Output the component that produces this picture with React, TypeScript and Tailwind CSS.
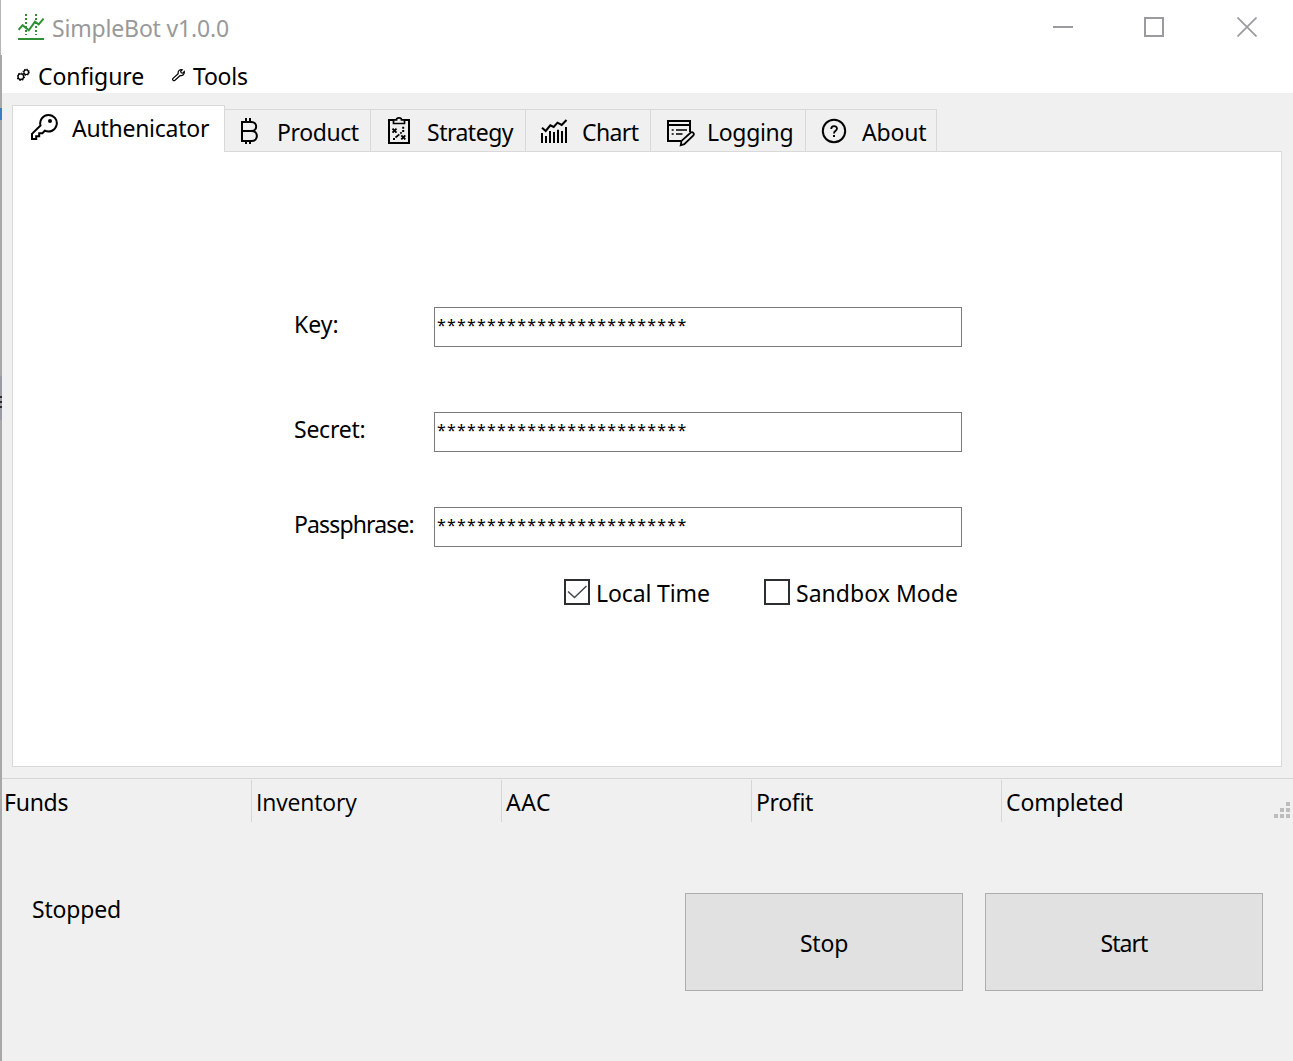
import React from "react";

function Icon({ box, className = "", children }: { box: string; className?: string; children: React.ReactNode }) {
  const [, , w, h] = box.split(" ");
  return (
    <svg viewBox={box} width={w} height={h} fill="none" stroke="currentColor" strokeWidth="2" className={`shrink-0 ${className}`}>
      {children}
    </svg>
  );
}

const LogoIcon = () => (
  <Icon box="18 13 28 28" className="text-[#2f8f35]">
    <path d="M26 14v21M36 14v21" strokeDasharray="2 2" strokeWidth="2" />
    <path d="M18.600 29.800L22.600 25.200L28.800 30.300L35 21.700L38.700 24.300L43.600 18.700" strokeWidth="2" />
    <path d="M18 39h26" />
  </Icon>
);

const GearsIcon = () => (
  <Icon box="17 68 14 14">
    <circle cx="20.8" cy="76.7" r="2.8" strokeWidth="1.3" />
    <circle cx="20.8" cy="76.7" r="3.7" strokeWidth="1.1" strokeDasharray="1.3 1.6" />
    <circle cx="26.2" cy="72.2" r="2.3" strokeWidth="1.2" />
    <circle cx="26.2" cy="72.2" r="3.1" strokeWidth="1.1" strokeDasharray="1.1 1.35" />
  </Icon>
);

const WrenchIcon = () => (
  <Icon box="172 68 14 14">
    <path d="M178.2 73.7C177.6 71 180 69 182.3 69.7L180.7 71.4l.5 1.4 1.5.4 1.6-1.7C184.7 74 182.5 76.3 180.2 75.5L175 80.2C173.6 81.3 171.9 79.7 173 78.4Z" strokeWidth="1.2" />
  </Icon>
);

const KeyIcon = () => (
  <Icon box="30 113 28 28">
    <path d="M40.500 125.500L32 133.900V139H36.200V136.200H39.200V133.200H42.400L44.800 130.700A8.300 8.300 0 1 0 40.500 125.500Z" />
    <circle cx="50" cy="121" r="2" fill="currentColor" stroke="none" />
  </Icon>
);

const BitcoinIcon = () => (
  <Icon box="239 117 28 28">
    <path d="M242 122H251.500C257.700 122 257.700 131 251.500 131H242M251.500 131C258.700 131 258.700 141 251.500 141H242V121" />
    <path d="M246 118v4M250 118v4M246 141v3M250 141v3" strokeWidth="2" />
  </Icon>
);

const StrategyIcon = () => (
  <Icon box="385 117 28 28">
    <path d="M393 120H389V143H409V120H405" />
    <path d="M393.500 123.500V119.800H396.500C396.500 117.200 401.500 117.200 401.500 119.800H404.500V123.500Z" strokeWidth="1.700" />
    <path d="M392.500 128.700l4 4M396.500 128.700l-4 4M401.300 135.300l4 4M405.300 135.300l-4 4" strokeWidth="1.900" />
    <path d="M395.500 137.500L401.700 132.300" strokeWidth="1.700" strokeDasharray="5 1.200" />
    <path d="M402.200 127.700h2M402.200 131h2M393 139h2" strokeWidth="2" />
  </Icon>
);

const ChartIcon = () => (
  <Icon box="540 117 28 28">
    <path d="M542 133v10M546 136v7M550 131v12M554 132v11M558 129.700v13.300M562 131v12M566 127v16" strokeWidth="2" />
    <path d="M542 127.700l3.700 3.300 4.600-5.700 3.400 1.700 3.800-4.300 4.200 2.300 4.800-5" strokeWidth="2" />
  </Icon>
);

const LoggingIcon = () => (
  <Icon box="665 118 30 30">
    <path d="M690 132V121H668V141H681.500M668 125h22" />
    <path d="M671.700 130h2M671.700 134h2M676 130h11M676 134h6.500" strokeWidth="1.700" />
    <path d="M680.700 145.300L681.500 140.900L690.800 132.500C692.600 131.500 694.800 133.300 693.400 135.300L684.300 144.200Z" strokeWidth="1.800" />
  </Icon>
);

const AboutIcon = () => (
  <Icon box="820 117 28 28">
    <circle cx="834" cy="131" r="11.200" />
    <path d="M831.200 129C831.200 125.200 837 125.200 837 128.600C837 131 834 130.700 834 133.500" strokeWidth="1.800" />
    <path d="M833 136h2" strokeWidth="2" />
  </Icon>
);

const tabs = [
  { name: "Product", icon: <BitcoinIcon />, box: "w-[146px]", text: "ml-[10px] tracking-[-0.4px]" },
  { name: "Strategy", icon: <StrategyIcon />, box: "w-[155px]", text: "ml-[14px] tracking-[-0.5px]" },
  { name: "Chart", icon: <ChartIcon />, box: "w-[125px]", text: "ml-[14px] tracking-[-0.6px]" },
  { name: "Logging", icon: <LoggingIcon />, box: "w-[155px]", text: "ml-[12px] tracking-[-0.32px]" },
  { name: "About", icon: <AboutIcon />, box: "w-[131px]", text: "ml-[14px] tracking-[-0.2px]" },
];

const fields = [
  { name: "Key:", row: "mb-[65px]", text: "tracking-[0px]" },
  { name: "Secret:", row: "mb-[55px]", text: "tracking-[-0.25px]" },
  { name: "Passphrase:", row: "", text: "tracking-[-0.86px]" },
];

const statuses = [
  { name: "Funds", text: "pl-[2px] tracking-[-0.25px]" },
  { name: "Inventory", text: "pl-1 font-['Open_Sans'] tracking-[-0.15px]" },
  { name: "AAC", text: "pl-1 tracking-[0.53px]" },
  { name: "Profit", text: "pl-1 tracking-[-0.35px]" },
  { name: "Completed", text: "pl-1 tracking-[-0.1px]" },
];

function Grip() {
  return (
    <div className="mt-[23px] mr-[3px] ml-auto grid h-4 w-4 grid-cols-3 gap-[2px]">
      {[0, 0, 1, 0, 1, 1, 1, 1, 1].map((on, i) => (
        <span key={i} className={on ? "size-1 bg-[#bdbdbd]" : "size-1"} />
      ))}
    </div>
  );
}

export default function App() {
  return (
    <div className="flex h-[1061px] w-[1293px] overflow-hidden bg-[#f0f0f0] font-['Noto_Sans',sans-serif] text-[23px] leading-8 whitespace-nowrap text-black">
      <div className="flex w-[2px] shrink-0 flex-col bg-[#a8a8a8]">
        <div className="h-[55px] border-l border-[#b5b5b5] bg-white" />
        <div className="mt-[53px] h-3 bg-[#3b7cc4]" />
        <div className="mt-[256px] flex h-11 flex-col gap-[3px] bg-[#9b9ba3] pt-5">
          <span className="h-[2px] bg-[#2a2a2e]" />
          <span className="h-[2px] bg-[#2a2a2e]" />
          <span className="h-[2px] bg-[#2a2a2e]" />
        </div>
      </div>

      <div className="flex min-w-0 flex-1 flex-col">
        <header className="flex h-[60px] shrink-0 items-start bg-white pl-4 text-[#999999]">
          <div className="mt-[13px]"><LogoIcon /></div>
          <span className="mt-3 ml-[6px] tracking-[-0.17px]">SimpleBot v1.0.0</span>
          <div className="mt-[17px] mr-[36px] ml-auto flex text-[#9a9a9f]">
            <Icon box="1053 17 20 20"><path d="M1053 27h20" /></Icon>
            <Icon box="1144 17 20 20" className="ml-[71px]"><rect x="1145" y="18" width="18" height="18" /></Icon>
            <Icon box="1237 17 20 20" className="ml-[73px]"><path d="M1237.500 17.500l19 19M1256.500 17.500l-19 19" strokeWidth="1.700" /></Icon>
          </div>
        </header>

        <nav className="flex h-[33px] shrink-0 bg-white pl-[15px]">
          <div className="mt-2"><GearsIcon /></div>
          <span className="ml-[7px] w-[106px] tracking-[-0.08px]">Configure</span>
          <div className="mt-2 ml-[28px]"><WrenchIcon /></div>
          <span className="ml-[7px] tracking-[-0.24px]">Tools</span>
        </nav>

        <main className="mr-[11px] ml-[10px] flex h-[685px] shrink-0 flex-col pt-3">
          <div className="relative z-10 flex h-[47px] shrink-0 items-end">
            <div className="flex h-[47px] w-[213px] border border-b-0 border-[#d9d9d9] bg-white pt-[6px] pl-[17px]">
              <div className="mt-px"><KeyIcon /></div>
              <span className="ml-[14px] tracking-[-0.25px]">Authenicator</span>
            </div>
            {tabs.map((t) => (
              <div key={t.name} className={`flex h-[43px] border border-l-0 border-[#d9d9d9] pt-[6px] pl-[14px] ${t.box}`}>
                <div className={t.name === "Logging" ? "mt-[2px]" : "mt-px"}>{t.icon}</div>
                <span className={t.text}>{t.name}</span>
              </div>
            ))}
          </div>
          <section className="-mt-px flex h-[616px] shrink-0 flex-col border border-[#d9d9d9] bg-white pt-[155px] pl-[281px]">
            {fields.map((f) => (
              <label key={f.name} className={`flex h-10 items-start ${f.row}`}>
                <span className={`mt-px w-[140px] shrink-0 ${f.text}`}>{f.name}</span>
                <span className="h-10 w-[528px] border border-[#7a7a7a] pt-px pl-[2px] text-base leading-8 tracking-[1.2px] text-black">
                  {"*".repeat(25)}
                </span>
              </label>
            ))}
            <div className="mt-[30px] flex pl-[270px]">
              <label className="flex w-[200px]">
                <span className="mt-[2px] flex size-[26px] border-2 border-[#2b2f2f]">
                  <Icon box="566 581 22 22" className="text-[#44484d]"><path d="M568 591.500l6.500 6 12-11.500" strokeWidth="1.500" /></Icon>
                </span>
                <span className="ml-[6px] tracking-[-0.12px]">Local Time</span>
              </label>
              <label className="flex">
                <span className="mt-[2px] size-[26px] border-2 border-[#2b2f2f]" />
                <span className="ml-[6px] tracking-[0.04px]">Sandbox Mode</span>
              </label>
            </div>
          </section>
        </main>

        <div className="flex h-[50px] shrink-0 border-t border-[#d6d6d6]">
          {statuses.map((s, i) => (
            <div key={s.name} className={`mt-px h-[42px] border-[#d6d6d6] pt-[6px] ${i < 4 ? "w-[250px] border-r" : "w-[150px]"} ${s.text}`}>
              {s.name}
            </div>
          ))}
          <Grip />
        </div>

        <footer className="flex pt-[65px] pr-[30px] pl-[30px]">
          <span className="tracking-[-0.2px]">Stopped</span>
          <button className="ml-auto h-[98px] w-[278px] border border-[#adadad] bg-[#e1e1e1] pt-[2px] tracking-[-0.2px]">Stop</button>
          <button className="ml-[22px] h-[98px] w-[278px] border border-[#adadad] bg-[#e1e1e1] pt-[2px] tracking-[-0.96px]">Start</button>
        </footer>
      </div>
    </div>
  );
}
